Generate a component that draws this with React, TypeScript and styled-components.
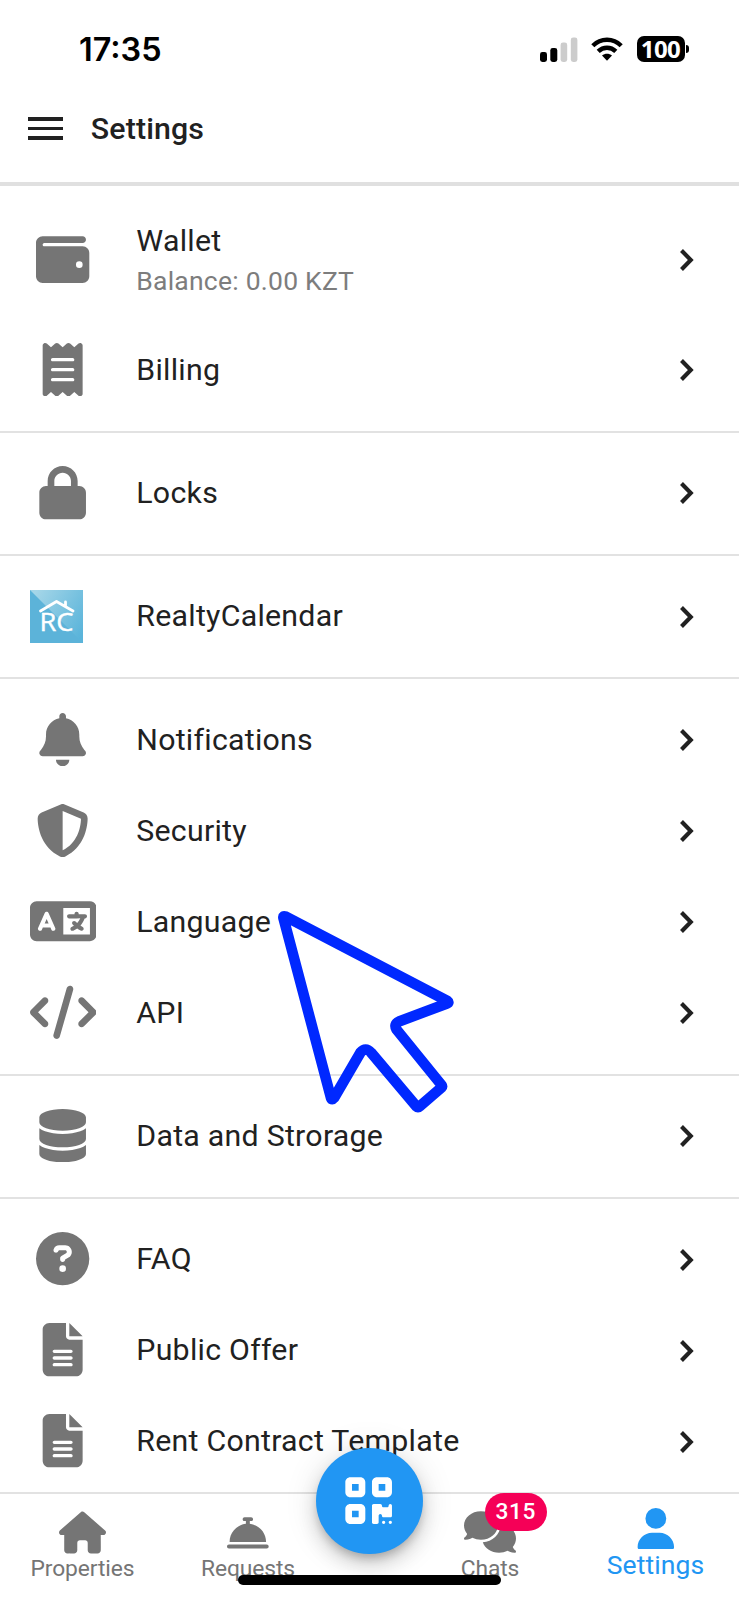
import React from "react";
import styled, { createGlobalStyle, css } from "styled-components";
import {
  FaWallet, FaReceipt, FaLock, FaBell, FaShieldHalved, FaLanguage, FaCode, FaDatabase,
  FaCircleQuestion, FaFileLines, FaHouse, FaBellConcierge, FaComments, FaUser, FaQrcode,
} from "react-icons/fa6";

const Global = createGlobalStyle`
  *, *::before, *::after { box-sizing: border-box; }
  body { margin: 0; background: #fff; font-family: Roboto, "Liberation Sans", sans-serif; color: #212121; }
`;

const Screen = styled.div`
  position: relative;
  width: 739px;
  height: 1600px;
  overflow: hidden;
  display: flex;
  flex-direction: column;
  background: #fff;
`;

const StatusBar = styled.div`
  height: 88px;
  flex: none;
  display: flex;
  justify-content: space-between;
  align-items: center;
  padding: 11px 50px 0 79px;
`;
const Clock = styled.span`
  font: 600 32.4px/38px Inter, sans-serif;
  color: #000;
`;
const Indicators = styled.div`
  display: flex;
  align-items: center;
  padding-bottom: 1px;
`;
const SignalBars = styled.svg`
  width: 38px;
  height: 25px;
`;
const WifiIcon = styled.svg`
  width: 32px;
  height: 24px;
  margin-left: 13px;
`;
const Battery = styled.div`
  display: flex;
  align-items: center;
  gap: 1.5px;
  margin-left: 14px;
`;
const BatteryBody = styled.div`
  width: 48px;
  height: 26px;
  border-radius: 7px;
  background: #000;
  color: #fff;
  font: 700 24px/25px "Open Sans", sans-serif;
  letter-spacing: -0.6px;
  text-align: center;
`;
const BatteryTip = styled.div`
  width: 3px;
  height: 8px;
  border-radius: 0 4px 4px 0;
  background: #000;
`;

const Header = styled.header`
  height: 97.8px;
  flex: none;
  display: flex;
  align-items: flex-start;
  padding: 20px 28px 0;
  border-bottom: 4px solid #e0e0e0;
`;
const MenuButton = styled.button`
  display: flex;
  flex-direction: column;
  justify-content: center;
  gap: 5.6px;
  width: 34.5px;
  height: 41px;
  padding: 0;
  border: 0;
  background: none;
`;
const MenuLine = styled.span`
  height: 3.9px;
  background: #212121;
`;
const Title = styled.h1`
  margin: 0 0 0 28.3px;
  font-size: 30.3px;
  line-height: 42px;
  font-weight: 500;
  letter-spacing: 0.15px;
`;

const List = styled.main`
  flex: none;
  padding-top: 10px;
`;
const Group = styled.section`
  & + & {
    margin-top: 15.15px;
    padding-top: 15.15px;
    border-top: 2px solid #e2e2e2;
  }
`;
const Row = styled.div<{ $tall?: boolean }>`
  display: flex;
  align-items: center;
  height: ${(p) => (p.$tall ? 128.8 : 91)}px;
  padding: 0 30px;
`;
const IconSlot = styled.span<{ $start?: boolean }>`
  width: 66.2px;
  margin-right: 40.1px;
  margin-bottom: ${(p) => (p.$start ? 0 : 1)}px;
  display: flex;
  justify-content: ${(p) => (p.$start ? "flex-start" : "center")};
  font-size: 53.3px;
  color: #757575;

  svg { flex: none; }
`;
const Labels = styled.span`
  flex: 1;
  display: flex;
  flex-direction: column;
  white-space: nowrap;
`;
const Label = styled.span`
  font-size: 30.3px;
  line-height: 42.5px;
  letter-spacing: 0.26px;
`;
const Sub = styled.span`
  font-size: 26.5px;
  line-height: 37.9px;
  letter-spacing: 0.23px;
  color: #7d7d7d;
`;
const Chevron = styled.svg`
  width: 14px;
  height: 22px;
  margin-right: 15px;
`;

const Nav = styled.nav`
  position: absolute;
  left: 0;
  right: 0;
  bottom: 0;
  height: 108px;
  display: grid;
  grid-template-columns: 165px 166px 76px 166px 165px;
  border-top: 2px solid #e2e2e2;
  background: #fff;
`;
const Tab = styled.div<{ $active?: boolean }>`
  display: flex;
  flex-direction: column;
  align-items: center;
  padding-top: ${(p) => (p.$active ? 13.5 : 17.5)}px;
  color: #757575;
  font-size: 22.8px;
  line-height: 27px;
  letter-spacing: -0.1px;
  ${(p) => p.$active && css`
    color: #2196f3;
    font-size: 26.5px;
    line-height: 28px;
    letter-spacing: 0.1px;
  `}
`;
const TabIcon = styled.span`
  position: relative;
  display: flex;
  align-items: center;
  height: 41.7px;
  font-size: 41.7px;
  margin-bottom: 2px;
`;
const Badge = styled.span`
  position: absolute;
  left: 20.7px;
  top: -18.5px;
  width: 62px;
  height: 38px;
  border-radius: 19px;
  background: #f50057;
  color: #fff;
  font-size: 22.7px;
  font-weight: 500;
  line-height: 38px;
  letter-spacing: 0.6px;
  text-align: center;
`;
const ScanButton = styled.button`
  position: absolute;
  left: 316px;
  top: 1447.8px;
  width: 106.7px;
  height: 106.7px;
  border: 0;
  border-radius: 50%;
  padding: 0 1.5px 1.5px 0;
  display: flex;
  align-items: center;
  justify-content: center;
  background: #2196f3;
  color: #fff;
  font-size: 53.3px;
  box-shadow: 0 6px 9px -2px rgba(0,0,0,.2), 0 11px 19px rgba(0,0,0,.14), 0 2px 34px rgba(0,0,0,.12);
`;
const HomeIndicator = styled.div`
  position: absolute;
  left: 238px;
  top: 1575px;
  width: 263px;
  height: 10px;
  border-radius: 5px;
  background: #000;
`;
const Pointer = styled.svg`
  position: absolute;
  left: 270px;
  top: 900px;
`;

const RealtyLogo = () => (
  <svg width="53" height="53" viewBox="0 0 53 53">
    <defs>
      <linearGradient id="rc" x1="0" y1="0.2" x2="1" y2="0.8">
        <stop offset="0" stopColor="#a5d6e8" />
        <stop offset="1" stopColor="#5ab4da" />
      </linearGradient>
    </defs>
    <rect width="53" height="53" fill="url(#rc)" />
    <path d="M0 0L53 53H0Z" fill="#5cb3d9" />
    <path d="M10.5 21L26.5 11.5L43 21M35.5 16.5V12" fill="none" stroke="#fff" strokeWidth="2.8" strokeLinecap="round" strokeLinejoin="round" />
    <text x="9.5" y="41.2" fontFamily="'Open Sans', sans-serif" fontSize="25.5" textLength="34" lengthAdjust="spacingAndGlyphs" fill="#fff" stroke="#fff" strokeWidth="0.4">RC</text>
  </svg>
);

type Item = { icon: React.ReactNode; label: string; sub?: string; start?: boolean };
const groups: Item[][] = [
  [
    { icon: <FaWallet />, label: "Wallet", sub: "Balance: 0.00 KZT" },
    { icon: <FaReceipt />, label: "Billing" },
  ],
  [{ icon: <FaLock />, label: "Locks" }],
  [{ icon: <RealtyLogo />, label: "RealtyCalendar", start: true }],
  [
    { icon: <FaBell />, label: "Notifications" },
    { icon: <FaShieldHalved />, label: "Security" },
    { icon: <FaLanguage size="66.6px" />, label: "Language" },
    { icon: <FaCode size="66.6px" />, label: "API" },
  ],
  [{ icon: <FaDatabase />, label: "Data and Strorage" }],
  [
    { icon: <FaCircleQuestion />, label: "FAQ" },
    { icon: <FaFileLines />, label: "Public Offer" },
    { icon: <FaFileLines />, label: "Rent Contract Template" },
  ],
];

export default function App() {
  return (
    <Screen>
      <Global />
      <StatusBar>
        <Clock>17:35</Clock>
        <Indicators>
          <SignalBars viewBox="0 0 38 25">
            <rect x="0" y="15" width="7" height="10" rx="2.4" />
            <rect x="10.3" y="11" width="7" height="14" rx="2.4" />
            <rect x="20.6" y="5.5" width="6.6" height="19.5" rx="2.4" fill="#ccc" />
            <rect x="30.8" y="0.5" width="6.6" height="24.5" rx="2.4" fill="#ccc" />
          </SignalBars>
          <WifiIcon viewBox="0 0 32 24">
            <g fill="none" stroke="#000" strokeWidth="4.4">
              <path d="M1.8 8.8C9.8.8 22.2.8 30.2 8.8" />
              <path d="M7.2 14.4C12.2 9.5 19.8 9.5 24.8 14.4" />
            </g>
            <path d="M11 18.6C13.9 16 18.1 16 21 18.6L16 23.8Z" />
          </WifiIcon>
          <Battery>
            <BatteryBody>100</BatteryBody>
            <BatteryTip />
          </Battery>
        </Indicators>
      </StatusBar>
      <Header>
        <MenuButton aria-label="Menu"><MenuLine /><MenuLine /><MenuLine /></MenuButton>
        <Title>Settings</Title>
      </Header>
      <List>
        {groups.map((items, g) => (
          <Group key={g}>
            {items.map((it) => (
              <Row key={it.label} $tall={!!it.sub}>
                <IconSlot $start={it.start}>{it.icon}</IconSlot>
                <Labels>
                  <Label>{it.label}</Label>
                  {it.sub && <Sub>{it.sub}</Sub>}
                </Labels>
                <Chevron viewBox="0 0 14 22">
                  <path d="M1.5 1.5L10.8 11L1.5 20.5" fill="none" stroke="#212121" strokeWidth="4.1" />
                </Chevron>
              </Row>
            ))}
          </Group>
        ))}
      </List>
      <Nav>
        <Tab><TabIcon><FaHouse size="47px" /></TabIcon>Properties</Tab>
        <Tab><TabIcon><FaBellConcierge /></TabIcon>Requests</Tab>
        <span />
        <Tab><TabIcon><FaComments size="52px" /><Badge>315</Badge></TabIcon>Chats</Tab>
        <Tab $active><TabIcon><FaUser /></TabIcon>Settings</Tab>
      </Nav>
      <ScanButton aria-label="Scan"><FaQrcode /></ScanButton>
      <HomeIndicator />
      <Pointer width="190" height="220" viewBox="270 900 190 220">
        <path
          d="M283.4 917.8Q283 915.5 285.5 916.5L447.5 1001Q449.5 1002.5 447 1003.5L399 1021.5Q393.500 1024 396.500 1029.500L441.500 1085Q442.500 1086.500 441.500 1087.500L419.500 1106.500Q418 1108 416.500 1106.500L371 1052.500Q365.500 1046.500 360.500 1052.500L334 1098Q332 1100.500 331 1098Z"
          fill="none"
          stroke="#0028ff"
          strokeWidth="10.6"
          strokeLinejoin="round"
        />
      </Pointer>
    </Screen>
  );
}
